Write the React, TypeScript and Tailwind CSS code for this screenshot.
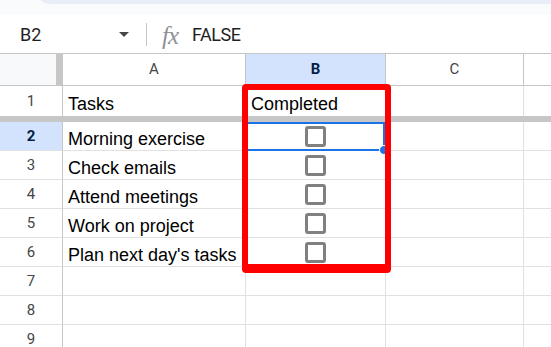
import React from "react";

function Checkbox() {
  return <div className="w-[21px] h-[21px] border-[3px] border-[#808080] rounded-[3px] bg-white" />;
}

function Row({ n, a, selected, checkbox }: { n: number; a?: string; selected?: boolean; checkbox?: boolean }) {
  return (
    <div className="flex h-[29px]">
      <div
        className={`w-[63px] shrink-0 border-r border-r-[#c4c7c5] border-b border-b-[#e1e1e1] flex items-center justify-center text-[15px] font-['Roboto'] ${
          selected ? "bg-[#d3e3fd] text-[#041e49] font-bold" : "bg-white text-[#444746]"
        }`}
      >
        {n}
      </div>
      <div className="w-[183px] shrink-0 border-r border-b border-[#e1e1e1] flex items-end pl-[5px] pb-[1px] text-[18px] leading-[20px] font-['Liberation_Sans'] text-black whitespace-nowrap overflow-hidden">
        {a}
      </div>
      <div className="w-[140px] shrink-0 border-r border-b border-[#e1e1e1] flex items-center justify-center">
        {checkbox && <Checkbox />}
      </div>
      <div className="w-[138px] shrink-0 border-r border-b border-[#e1e1e1]" />
      <div className="flex-1 border-b border-[#e1e1e1]" />
    </div>
  );
}

export default function App() {
  return (
    <div className="w-[551px] h-[347px] overflow-hidden bg-white relative font-['Roboto']">
      {/* top strip */}
      <div className="h-[15px] bg-[#f9fbfd] overflow-hidden">
        <div className="ml-[35px] h-[20px] -mt-[16px] bg-[#e9eef6] rounded-bl-[16px]" />
      </div>

      {/* formula bar */}
      <div className="h-[39px] bg-white border-b border-[#c4c7c5] flex items-center">
        <div className="w-[20px]" />
        <div className="text-[18px] text-[#1f1f1f] font-['Roboto'] w-[99px]">B2</div>
        <svg width="10" height="6" viewBox="0 0 10 6" className="mt-[1px]">
          <path d="M0 0 L10 0 L5 5 Z" fill="#444746" />
        </svg>
        <div className="ml-[17px] w-px h-[23px] bg-[#c4c7c5]" />
        <div className="ml-[15px] text-[25px] italic font-['Liberation_Serif'] text-[#8e9297] leading-none mt-[2px] tracking-[-1px]">
          fx
        </div>
        <div className="ml-[14px] text-[18px] text-[#1f1f1f] font-['Roboto'] tracking-[-0.5px]">FALSE</div>
      </div>

      {/* column header */}
      <div className="flex h-[32px] border-b border-[#c4c7c5]">
        <div className="w-[63px] shrink-0 flex bg-[#f8f9fa] border-r border-[#c4c7c5]">
          <div className="flex-1" />
          <div className="w-[6px] bg-[#c7c7c7]" />
        </div>
        <div className="w-[183px] shrink-0 border-r border-[#c4c7c5] flex items-center justify-center text-[15px] text-[#444746]">
          A
        </div>
        <div className="w-[140px] shrink-0 border-r border-[#c4c7c5] bg-[#d3e3fd] flex items-center justify-center text-[15px] font-bold text-[#041e49]">
          B
        </div>
        <div className="w-[138px] shrink-0 border-r border-[#c4c7c5] flex items-center justify-center text-[15px] text-[#444746]">
          C
        </div>
        <div className="flex-1" />
      </div>

      {/* row 1 */}
      <div className="flex h-[30px]">
        <div className="w-[63px] shrink-0 border-r border-[#c4c7c5] flex items-center justify-center text-[15px] text-[#444746]">
          1
        </div>
        <div className="w-[183px] shrink-0 border-r border-[#e1e1e1] flex items-end pb-[2px] pl-[5px] text-[18px] leading-[20px] font-['Liberation_Sans'] text-black">
          Tasks
        </div>
        <div className="w-[140px] shrink-0 border-r border-[#e1e1e1] flex items-end pb-[2px] pl-[5px] text-[18px] leading-[20px] font-['Liberation_Sans'] text-black">
          Completed
        </div>
        <div className="w-[138px] shrink-0 border-r border-[#e1e1e1]" />
        <div className="flex-1" />
      </div>

      {/* frozen band */}
      <div className="h-[6px] bg-[#c7c7c7]" />

      <Row n={2} a="Morning exercise" selected checkbox />
      <Row n={3} a="Check emails" checkbox />
      <Row n={4} a="Attend meetings" checkbox />
      <Row n={5} a="Work on project" checkbox />
      <Row n={6} a="Plan next day's tasks" checkbox />
      <Row n={7} />
      <Row n={8} />
      <Row n={9} />

      {/* selection */}
      <div className="absolute left-[245px] top-[122px] w-[140px] h-[29px] border-2 border-[#1a73e8]" />
      <div className="absolute left-[379px] top-[145px] w-[10px] h-[10px] rounded-full bg-[#1a73e8] border border-white" />

      {/* red annotation box */}
      <div className="absolute left-[242px] top-[84px] w-[149px] h-[189px] border-[6px] border-b-[9px] border-[#ff0000] rounded-[4px]" />
    </div>
  );
}
